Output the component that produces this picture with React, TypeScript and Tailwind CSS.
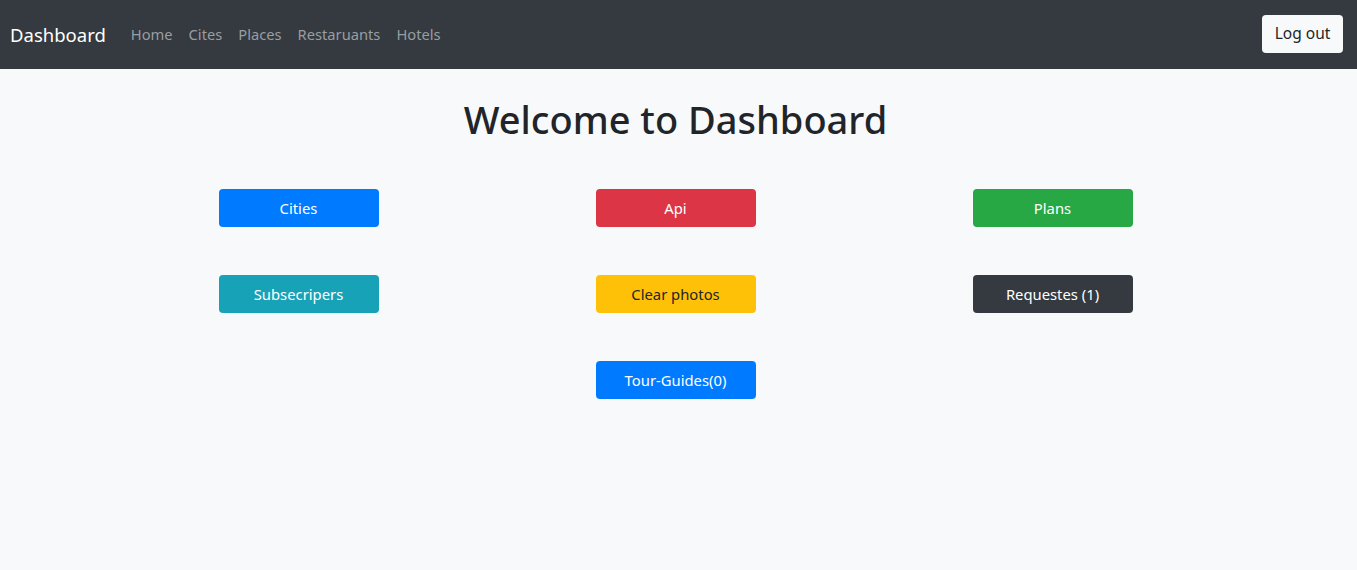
const font = { fontFamily: '"Noto Sans", "Open Sans", sans-serif' };

const navLinks = ["Home", "Cites", "Places", "Restaruants", "Hotels"];

const actions = [
  { label: "Cities", cls: "bg-[#007bff] text-white" },
  { label: "Api", cls: "bg-[#dc3545] text-white" },
  { label: "Plans", cls: "bg-[#28a745] text-white" },
  { label: "Subsecripers", cls: "bg-[#17a2b8] text-white" },
  { label: "Clear photos", cls: "bg-[#ffc107] text-[#212529]" },
  { label: "Requestes (1)", cls: "bg-[#343a40] text-white" },
  { label: "", cls: "" },
  { label: "Tour-Guides(0)", cls: "bg-[#007bff] text-white" },
];

export default function App() {
  return (
    <div className="min-h-[570px] bg-[#f8f9fa]" style={font}>
      <nav className="h-[69px] bg-[#343a40] flex items-center justify-between pl-[10px] pr-[14px]">
        <div className="flex items-center">
          <span className="text-white text-[18.5px] mr-[17px]">Dashboard</span>
          <ul className="flex">
            {navLinks.map((l) => (
              <li key={l} className="px-[8px] text-[14.7px] text-[#9a9da0]">
                {l}
              </li>
            ))}
          </ul>
        </div>
        <button className="h-[38px] w-[81px] -mt-[1px] rounded-[4px] bg-[#f8f9fa] text-[#212529] text-[15.5px]">
          Log out
        </button>
      </nav>

      <h1 className="mt-[26px] pr-[6px] text-center text-[38px] leading-[48px] font-medium text-[#212529]">
        Welcome to Dashboard
      </h1>

      <div className="w-[1131px] ml-[110px] mt-[46px] grid grid-cols-3 gap-y-[48px] justify-items-center">
        {actions.map((a, i) =>
          a.label ? (
            <button
              key={i}
              className={`w-[160px] h-[38px] rounded-[4px] text-[14.8px] ${a.cls}`}
            >
              {a.label}
            </button>
          ) : (
            <div key={i} />
          )
        )}
      </div>
    </div>
  );
}
